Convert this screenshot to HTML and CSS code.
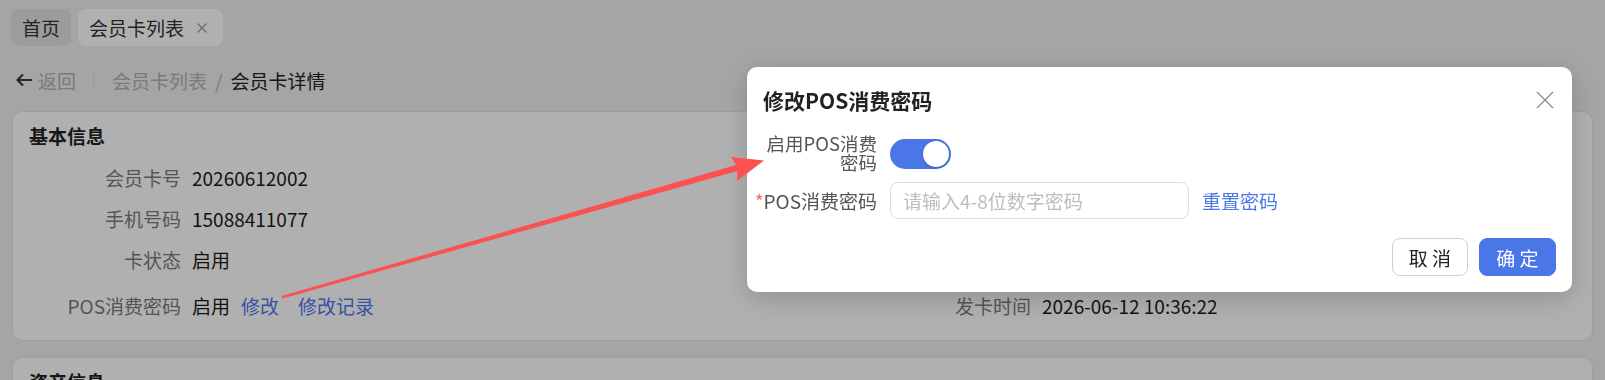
FILE: index.html
```html
<!DOCTYPE html>
<html lang="zh-CN">
<head>
  <meta charset="UTF-8">
  <meta name="viewport" content="width=device-width, initial-scale=1.0">
  <title>会员卡详情</title>
  <link rel="stylesheet" href="styles.css">
</head>
<body>

  <div class="page">
    <!-- 标签页 -->
    <div class="tabs">
      <div class="tab tab-home">首页</div>
      <div class="tab tab-active">
        <span>会员卡列表</span>
        <svg class="tab-close" width="12" height="12" viewBox="0 0 12 12"><path d="M1.5 1.5L10.5 10.5M10.5 1.5L1.5 10.5" stroke="currentColor" stroke-width="1.3" fill="none"/></svg>
      </div>
    </div>

    <!-- 面包屑 -->
    <div class="crumbs">
      <span class="back">
        <svg width="16" height="14" viewBox="0 0 16 14"><path d="M16 7H1.5M7 1.5L1.5 7L7 12.5" stroke="currentColor" stroke-width="2.2" fill="none" stroke-linejoin="round"/></svg>
        返回
      </span>
      <span class="crumb-sep"></span>
      <span class="crumb">会员卡列表</span>
      <span class="crumb-slash">/</span>
      <span class="crumb crumb-current">会员卡详情</span>
    </div>

    <!-- 基本信息 -->
    <section class="card">
      <h3 class="card-title">基本信息</h3>
      <div class="info-row">
        <div class="cell"><span class="label">会员卡号</span><span class="value">20260612002</span></div>
      </div>
      <div class="info-row">
        <div class="cell"><span class="label">手机号码</span><span class="value">15088411077</span></div>
      </div>
      <div class="info-row">
        <div class="cell"><span class="label">卡状态</span><span class="value">启用</span></div>
      </div>
      <div class="info-row info-row-last">
        <div class="cell">
          <span class="label">POS消费密码</span>
          <span class="value">启用</span>
          <a class="link">修改</a>
          <a class="link link-wide">修改记录</a>
        </div>
        <div class="cell">
          <span class="label">发卡时间</span>
          <span class="value">2026-06-12 10:36:22</span>
        </div>
      </div>
    </section>

    <!-- 资产信息 -->
    <section class="card">
      <h3 class="card-title">资产信息</h3>
    </section>
  </div>

  <div class="mask"></div>

  <!-- 修改POS消费密码 弹窗 -->
  <div class="dialog">
    <div class="dialog-header">
      <span class="dialog-title">修改POS消费密码</span>
      <svg class="dialog-close" width="18" height="18" viewBox="0 0 18 18"><path d="M1 1L17 17M17 1L1 17" stroke="currentColor" stroke-width="1.3" fill="none"/></svg>
    </div>
    <div class="form">
      <div class="form-row">
        <label class="form-label form-label-wrap">启用POS消费<br>密码</label>
        <span class="switch"><span class="switch-knob"></span></span>
      </div>
      <div class="form-row">
        <label class="form-label"><span class="required">*</span>POS消费密码</label>
        <input class="input" type="text" placeholder="请输入4-8位数字密码">
        <a class="reset-link">重置密码</a>
      </div>
    </div>
    <div class="dialog-footer">
      <button class="btn">取 消</button>
      <button class="btn btn-primary">确 定</button>
    </div>
  </div>

  <!-- 标注箭头 -->
  <svg class="annot" width="1605" height="380" viewBox="0 0 1605 380">
    <polygon points="281.5,296 736,165 731,157 764,160.5 737,181 737.5,171 282.5,298.5" fill="#fc5151"/>
  </svg>

</body>
</html>
```

FILE: styles.css
```css
/* 基本 body 스타일 */
body {
  margin: 0;
  width: 1605px;
  height: 380px;
  overflow: hidden;
  position: relative;
  font-family: "Noto Sans CJK SC", "Liberation Sans", sans-serif;
  background-color: #ececec;
  color: #222;
}

/* 标签页 */
.tabs {
  display: flex;
  gap: 7px;
  padding: 9px 11px 0;
}

.tab {
  display: flex;
  align-items: center;
  height: 37px;
  padding: 0 11px;
  border-radius: 8px;
  font-size: 19px;
  color: #333;
}

.tab-home {
  background-color: #e0e0e0;
}

.tab-active {
  background-color: #fdfdfd;
  padding-right: 15px;
  gap: 12px;
}

.tab-close {
  color: #999;
}

/* 面包屑 */
.crumbs {
  display: flex;
  align-items: center;
  height: 40px;
  margin-top: 14px;
  padding-left: 16px;
  font-size: 19px;
  color: #b0b0b0;
}

.back {
  display: flex;
  align-items: center;
  gap: 6px;
}

.back svg {
  color: #3a3a3a;
}

.crumb-sep {
  width: 1px;
  height: 16px;
  background-color: #dedede;
  margin: 0 18px 0 17px;
}

.crumb-slash {
  margin: 0 8px;
}

.crumb-current {
  color: #222;
}

/* 卡片 */
.card {
  margin: 11px 12px 0;
  padding: 12px 16px 9px;
  background-color: #fdfdfd;
  border: 1px solid #e2e2e2;
  border-radius: 10px;
}

.card + .card {
  margin-top: 16px;
}

.card-title {
  margin: 0 0 9px;
  font-size: 19px;
  line-height: 24px;
  font-weight: bold;
  color: #222;
}

.info-row {
  display: grid;
  grid-template-columns: 850px 1fr;
  height: 41px;
  align-items: center;
  font-size: 19px;
}

.info-row-last {
  height: 51px;
}

.cell {
  display: flex;
  align-items: center;
}

.label {
  width: 152px;
  text-align: right;
  margin-right: 11px;
  color: #7a7a7a;
  white-space: nowrap;
}

.value {
  color: #1a1a1a;
}

.link {
  margin-left: 11px;
  color: #4b78e9;
  cursor: pointer;
}

.link-wide {
  margin-left: 19px;
}

/* 遮罩 */
.mask {
  position: fixed;
  inset: 0;
  background-color: rgba(0, 0, 0, 0.3);
}

/* 弹窗 */
.dialog {
  position: absolute;
  left: 747px;
  top: 67px;
  width: 825px;
  background-color: #fff;
  border-radius: 10px;
  box-shadow: 0 6px 24px rgba(0, 0, 0, 0.18);
}

.dialog-header {
  display: flex;
  justify-content: space-between;
  align-items: center;
  height: 26px;
  padding: 20px 18px 0 16px;
}

.dialog-title {
  font-size: 21px;
  line-height: 26px;
  font-weight: bold;
  color: #222;
}

.dialog-close {
  color: #8c8c8c;
}

.form {
  padding-top: 21px;
}

.form-row {
  display: flex;
  align-items: center;
  min-height: 37px;
  margin-bottom: 11px;
}

.form-row + .form-row {
  margin-bottom: 0;
}

.form-label {
  width: 130px;
  margin-right: 13px;
  text-align: right;
  font-size: 19px;
  color: #555;
  white-space: nowrap;
}

.form-label-wrap {
  font-size: 18.5px;
  line-height: 18.5px;
}

.required {
  color: #f56c6c;
}

.switch {
  display: flex;
  justify-content: flex-end;
  align-items: center;
  width: 61px;
  height: 30px;
  padding: 0 2px;
  box-sizing: border-box;
  border-radius: 15px;
  background-color: #4a76e8;
  margin-top: 3px;
}

.switch-knob {
  width: 26px;
  height: 26px;
  border-radius: 50%;
  background-color: #fff;
  box-shadow: 0 1px 3px rgba(0, 0, 0, 0.25);
}

.input {
  width: 299px;
  height: 37px;
  padding: 0 12px;
  box-sizing: border-box;
  border: 1px solid #dcdcdc;
  border-radius: 8px;
  font-family: inherit;
  font-size: 19px;
  outline: none;
}

.input::placeholder {
  color: #bdbdbd;
}

.reset-link {
  margin-left: 13px;
  font-size: 19px;
  color: #4a78e8;
  cursor: pointer;
}

.dialog-footer {
  display: flex;
  justify-content: flex-end;
  gap: 11px;
  padding: 19px 16px 16px;
}

.btn {
  height: 38px;
  width: 76px;
  border: 1px solid #cfcfcf;
  border-radius: 8px;
  background-color: #fff;
  font-family: inherit;
  font-size: 19px;
  color: #222;
  cursor: pointer;
}

.btn-primary {
  width: 77px;
  border-color: #4a76e8;
  background-color: #4a76e8;
  color: #fff;
}

/* 标注箭头 */
.annot {
  position: absolute;
  left: 0;
  top: 0;
  pointer-events: none;
}
```
